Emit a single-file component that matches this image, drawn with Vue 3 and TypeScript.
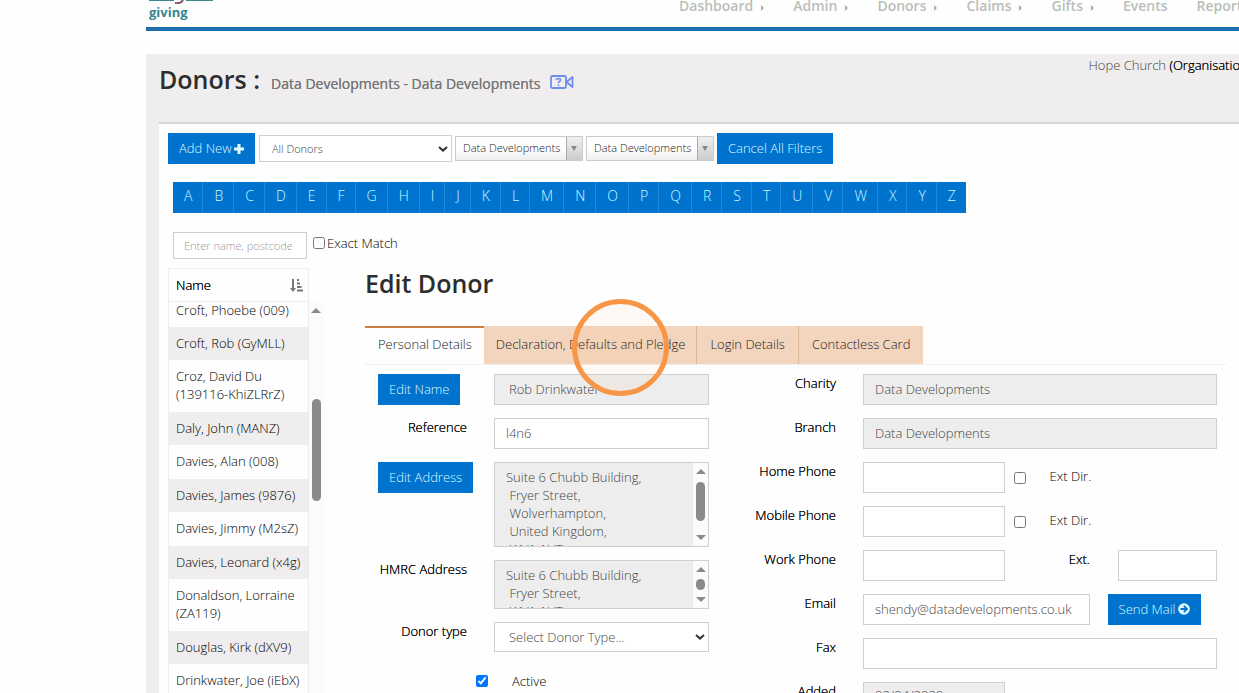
<script setup lang="ts">
import { ref } from 'vue'

interface MenuItem { label: string; sub: boolean }
interface Phone { id: string; label: string }

const menu: MenuItem[] = [
  { label: 'Dashboard', sub: true },
  { label: 'Admin', sub: true },
  { label: 'Donors', sub: true },
  { label: 'Claims', sub: true },
  { label: 'Gifts', sub: true },
  { label: 'Events', sub: false },
  { label: 'Reports', sub: true },
]
const letters: string[] = 'ABCDEFGHIJKLMNOPQRSTUVWXYZ'.split('')
const donors: string[] = [
  'Croft, Phoebe (009)',
  'Croft, Rob (GyMLL)',
  'Croz, David Du (139116-KhiZLRrZ)',
  'Daly, John (MANZ)',
  'Davies, Alan (008)',
  'Davies, James (9876)',
  'Davies, Jimmy (M2sZ)',
  'Davies, Leonard (x4g)',
  'Donaldson, Lorraine (ZA119)',
  'Douglas, Kirk (dXV9)',
  'Drinkwater, Joe (iEbX)',
]
const phones: Phone[] = [
  { id: 'home', label: 'Home Phone' },
  { id: 'mobile', label: 'Mobile Phone' },
]
const name = ref('Rob Drinkwater')
const reference = ref('l4n6')
const address = ref('Suite 6 Chubb Building,\n Fryer Street,\n Wolverhampton,\n United Kingdom,\n WV1 1HT')
const hmrc = ref('Suite 6 Chubb Building,\n Fryer Street,\n WV1 1HT')
const email = ref('shendy@datadevelopments.co.uk')
const active = ref(true)
</script>

<template>
  <div class="page">
    <header class="top">
      <a href="#" class="logo">
        <svg class="mark" width="66" height="4" viewBox="0 0 66 4" aria-hidden="true">
          <path d="M0 0H25V1H0zM37 0H64V1H37z" fill="#3b8a92" />
          <path d="M26 3Q32 4 34 0" fill="none" stroke="#7c5a68" stroke-width="2" />
        </svg>
        <span>giving</span>
      </a>
      <nav class="menu">
        <a v-for="m in menu" :key="m.label" href="#">{{ m.label }}<i v-if="m.sub" class="caret"></i></a>
      </nav>
    </header>

    <div class="shell">
      <div class="title">
        <h1>Donors :</h1>
        <span class="sub">Data Developments - Data Developments</span>
        <svg class="cam" width="24" height="16" viewBox="0 0 24 16" fill="none" stroke="#6e8ff0" aria-hidden="true">
          <rect x="1" y="2" width="15" height="12" rx="1.5" stroke-width="1.8" />
          <path d="M16.5 8L22.5 3V13Z" stroke-width="1.8" stroke-linejoin="round" />
          <path d="M6.3 6.2Q6.5 4.5 8.4 4.5Q10.5 4.5 10.5 6.1Q10.5 7 9.4 7.6Q8.5 8.1 8.5 9.2M8.5 10.4V12" stroke-width="1.7" />
        </svg>
        <span class="org">Hope Church <b>(Organisation)</b></span>
      </div>

      <main class="panel">
        <div class="toolbar">
          <button type="button" class="btn">Add New
            <svg width="10" height="10" viewBox="0 0 10 10" aria-hidden="true"><path d="M3.5 0h3v3.5H10v3H6.5V10h-3V6.5H0v-3h3.5z" fill="#e4fbff" /></svg>
          </button>
          <div class="pick filter">
            <select aria-label="Donor filter"><option>All Donors</option></select>
            <svg width="10" height="6" viewBox="0 0 10 6" aria-hidden="true"><path d="M1 1L5 4.6L9 1" fill="none" stroke="#333" stroke-width="2" /></svg>
          </div>
          <button type="button" class="chosen"><span>Data Developments</span><i></i></button>
          <button type="button" class="chosen"><span>Data Developments</span><i></i></button>
          <button type="button" class="btn">Cancel All Filters</button>
        </div>

        <div class="letters">
          <a v-for="l in letters" :key="l" href="#">{{ l }}</a>
        </div>

        <div class="search">
          <input type="text" class="find" aria-label="Search" placeholder="Enter name, postcode or ref">
          <input id="exact" type="checkbox"><label for="exact">Exact Match</label>
        </div>

        <div class="body">
          <section class="list">
            <table>
              <thead>
                <tr><th><div class="head">Name
                  <svg width="13" height="13" viewBox="0 0 13 13" fill="#777" aria-hidden="true"><path d="M2 0h2v9h2L3 13L0 9h2zM7 0h2v2H7zM7 3.5h3v2H7zM7 7h4.5v2H7zM7 10.5h6v2H7z" /></svg>
                </div></th></tr>
              </thead>
              <tbody><tr v-for="d in donors" :key="d"><td>{{ d }}</td></tr></tbody>
            </table>
            <div class="rail" aria-hidden="true"><i class="up"></i><i class="thumb"></i></div>
          </section>

          <section class="edit">
            <h2>Edit Donor</h2>
            <div class="tabs" role="tablist">
              <button type="button" role="tab" class="on">Personal Details</button>
              <button type="button" role="tab" class="target">Declaration, Defaults and Pledge<span class="ring"></span></button>
              <button type="button" role="tab">Login Details</button>
              <button type="button" role="tab">Contactless Card</button>
            </div>

            <form class="form" @submit.prevent>
              <div class="col left">
                <div class="row">
                  <div class="act"><button type="button" class="btn">Edit Name</button></div>
                  <input v-model="name" type="text" class="inset" aria-label="Name" disabled>
                </div>
                <div class="row">
                  <label for="ref">Reference</label>
                  <input id="ref" v-model="reference" type="text">
                </div>
                <div class="row">
                  <div class="act"><button type="button" class="btn">Edit Address</button></div>
                  <div class="area tall">
                    <textarea v-model="address" aria-label="Address" disabled></textarea>
                    <div class="bar" aria-hidden="true"><i class="up"></i><i class="thumb"></i><i class="down"></i></div>
                  </div>
                </div>
                <div class="row">
                  <label for="hmrc">HMRC Address</label>
                  <div class="area short">
                    <textarea id="hmrc" v-model="hmrc" disabled></textarea>
                    <div class="bar" aria-hidden="true"><i class="up"></i><i class="thumb"></i><i class="down"></i></div>
                  </div>
                </div>
                <div class="row">
                  <label for="type">Donor type</label>
                  <div class="pick">
                    <select id="type"><option>Select Donor Type...</option></select>
                    <svg width="10" height="6" viewBox="0 0 10 6" aria-hidden="true"><path d="M1 1L5 4.6L9 1" fill="none" stroke="#333" stroke-width="2" /></svg>
                  </div>
                </div>
                <div class="tick"><input id="active" v-model="active" type="checkbox"><label for="active">Active</label></div>
              </div>

              <div class="col right">
                <div class="row">
                  <label for="charity">Charity</label>
                  <input id="charity" type="text" value="Data Developments" disabled>
                </div>
                <div class="row">
                  <label for="branch">Branch</label>
                  <input id="branch" type="text" value="Data Developments" disabled>
                </div>
                <div v-for="p in phones" :key="p.id" class="row">
                  <label :for="p.id">{{ p.label }}</label>
                  <div class="split phone">
                    <input :id="p.id" type="text">
                    <input :id="p.id + '-dir'" type="checkbox">
                    <label :for="p.id + '-dir'" class="plain">Ext Dir.</label>
                  </div>
                </div>
                <div class="row">
                  <label for="work">Work Phone</label>
                  <div class="split work">
                    <input id="work" type="text">
                    <label for="ext">Ext.</label>
                    <input id="ext" type="text">
                  </div>
                </div>
                <div class="row">
                  <label for="email">Email</label>
                  <div class="split mail">
                    <input id="email" v-model="email" type="text">
                    <button type="button" class="btn">Send Mail
                      <svg width="12" height="12" viewBox="0 0 12 12" aria-hidden="true"><circle cx="6" cy="6" r="5.8" fill="#e4fbff" /><path d="M2.5 6H8.5M5.8 2.8L9 6L5.8 9.2" fill="none" stroke="#0073cf" stroke-width="1.8" /></svg>
                    </button>
                  </div>
                </div>
                <div class="row">
                  <label for="fax">Fax</label>
                  <input id="fax" type="text">
                </div>
                <div class="row">
                  <label for="added">Added</label>
                  <div class="split phone"><input id="added" type="text" class="stamp" value="02/04/2020" disabled></div>
                </div>
              </div>
            </form>
          </section>
        </div>
      </main>
    </div>
  </div>
</template>

<style>
body { margin: 0; background: #fefefe; }
</style>

<style scoped>
* { box-sizing: border-box; }
.page {
  height: 100vh;
  overflow: hidden;
  padding-left: 146px;
  font: 300 13px/18px "Open Sans", "Noto Sans", sans-serif;
  color: #000;
}
a { text-decoration: none; }
button, input, select, textarea { font: inherit; margin: 0; border-radius: 0; }

.top { display: flex; height: 31px; border-bottom: 4px solid #1c6dac; }
.logo { display: flex; flex-direction: column; width: 533px; flex: none; padding-left: 3px; font: 700 13px/16px "Open Sans", sans-serif; color: #35868f; }
.mark { display: block; flex: none; }
.menu { display: flex; align-items: flex-start; gap: 29px; font-size: 14px; font-weight: 600; line-height: 12px; white-space: nowrap; }
.menu a { color: #b9beb9; display: flex; align-items: center; flex: none; }
.caret { margin: 3px 0 0 8px; border-left: 3px solid #a9aea9; border-top: 3px solid transparent; border-bottom: 3px solid transparent; }

.shell { margin-top: 23px; background: #efeded; padding-left: 13px; }
.title { display: flex; height: 68px; padding-top: 8px; align-items: flex-start; white-space: nowrap; overflow: hidden; }
h1, h2 { margin: 0; font-size: 25px; line-height: 34px; font-weight: 600; color: #2d2d2d; }
.sub { margin: 12px 0 0 11px; font-size: 14px; font-weight: 400; line-height: 20px; color: #777; text-shadow: 0 0 currentColor; }
.cam { margin: 12px 0 0 10px; flex: none; }
.org { margin: -6px 0 0 514px; font-weight: 300; color: #444; flex: none; }
.org b { font-weight: 300; color: #000; text-shadow: 0 0 currentColor; }

.panel { border-top: 2px solid #d5d5dc; background: #fefefe; padding: 9px 13px 0 9px; }
.btn { height: 31px; padding: 0 11px 2px; border: 0; background: #0073cf; color: #dcfaff; white-space: nowrap; flex: none; }
.btn svg { vertical-align: -1px; margin-left: -1px; }
.toolbar { display: flex; align-items: center; gap: 3px; }
.pick { position: relative; display: flex; }
.pick select { appearance: none; width: 100%; height: 30px; padding: 0 20px 0 14px; border: 1px solid #ccd0d4; background: #fff; color: #444; }
.pick svg { position: absolute; right: 4px; top: 12px; }
.filter { width: 193px; margin-left: 1px; }
.filter select { height: 27px; font-size: 11px; padding-left: 12px; }
.filter svg { top: 11px; }
.chosen { display: flex; width: 128px; height: 25px; padding: 0; border: 1px solid #c8ccd0; background: linear-gradient(#fff 50%, #eee); font-size: 11px; color: #222; white-space: nowrap; }
.chosen span { flex: 1; text-align: left; padding-left: 7px; line-height: 22px; }
.chosen i { width: 16px; height: 23px; border-left: 1px solid #aaa; background: linear-gradient(#f0f0f0, #ccc); display: flex; align-items: center; justify-content: center; }
.chosen i::after { content: ""; border-top: 5px solid #888; border-left: 3px solid transparent; border-right: 3px solid transparent; }

.letters { display: flex; width: max-content; margin: 18px 0 0 5px; background: #0073cf; font-size: 14px; }
.letters a { padding: 0 10px 0 11px; line-height: 28px; height: 31px; color: #ccf8ff; border-right: 1px solid #2187d8; }
.letters a:last-child { border-right: 0; }

.search { display: flex; margin: 19px 0 0 5px; height: 27px; }
.find { width: 134px; padding: 0 14px 0 10px; border: 1px solid #ccd0d4; font-size: 11px; color: #555; }
.find::placeholder { color: #999; }
.search input[type=checkbox] { margin: 5px 2px 0 6px; }
.search label { line-height: 22px; }
input[type=checkbox] { width: 12px; height: 12px; flex: none; }

.body { display: flex; margin-top: 9px; }
.list { display: flex; width: 155px; flex: none; }
table { width: 141px; border-collapse: collapse; display: block; }
thead, tbody, tr, th, td { display: block; }
th { height: 34px; border: 1px solid #eee; padding: 8px 7px; font-weight: 300; text-shadow: 0 0 currentColor; }
.head { display: flex; justify-content: space-between; align-items: center; margin-right: -2px; line-height: 16px; }
td { padding: 7px 2px 9px 7px; border-left: 1px solid #eee; border-right: 1px solid #eee; }
tr:nth-child(even) td { background: #efeded; padding-bottom: 8px; }
tbody tr:first-child td { padding-top: 0; padding-bottom: 8px; margin-top: -1px; }
.rail { flex: 1; margin: 34px 0 0; background: #fbfbfb; display: flex; flex-direction: column; align-items: center; padding-top: 6px; }
.up { border-bottom: 5px solid #8a8a8a; border-left: 5px solid transparent; border-right: 5px solid transparent; }
.down { border-top: 5px solid #8a8a8a; border-left: 5px solid transparent; border-right: 5px solid transparent; }
.thumb { width: 9px; border-radius: 5px; background: #8a8a8a; }
.rail .thumb { margin-top: 86px; height: 102px; }

.edit { flex: 1; min-width: 0; margin-left: 42px; }
h2 { margin-top: -2px; }
.tabs { display: flex; margin-top: 26px; height: 39px; border-bottom: 1px solid #eee; }
.tabs button { height: 38px; padding: 0 13px 2px; border: 0; border-right: 1px solid #e0b795; background: #f3d5bd; color: #222; white-space: nowrap; flex: none; }
.tabs button.on { background: #fefefe; border-top: 2px solid #cc7f3f; border-right: 0; padding: 0 12px 4px 13px; }
.tabs button:last-child { border-right: 0; }
.tabs button.target { position: relative; padding: 0 11px 2px 12px; }
.ring { position: absolute; left: 88px; top: -27px; width: 97px; height: 97px; border: 5px solid #f79646; border-radius: 50%; background: rgba(247, 150, 70, 0.05); pointer-events: none; }

.form { display: grid; grid-template-columns: minmax(0, 344fr) minmax(0, 508fr); padding: 9px 9px 0 0; }
.col { display: flex; flex-direction: column; gap: 13px; }
.row { display: grid; grid-template-columns: 102px minmax(0, 1fr); column-gap: 27px; align-items: start; }
.right .row { grid-template-columns: 127px minmax(0, 1fr); }
.row label { text-align: right; white-space: nowrap; text-shadow: 0 0 currentColor; }
.row input[type=text] { width: 100%; min-width: 0; height: 31px; padding: 0 11px 2px; border: 1px solid #ccd0d4; background: #fff; color: #444; }
.row input[type=text]:disabled, .area textarea:disabled { background: #ededed; }
.row input[type=text].inset { padding-left: 14px; }
.row input[type=text].stamp { padding-bottom: 6px; }
.act { padding-left: 13px; }
.area { display: flex; border: 1px solid #ccd0d4; background: #ededed; overflow: hidden; }
.tall { height: 85px; }
.short { height: 49px; }
.area textarea { flex: 1; min-width: 0; padding: 5px 0 0 11px; border: 0; resize: none; overflow: hidden; color: #444; }
.bar { width: 15px; background: #fbfbfb; display: flex; flex-direction: column; align-items: center; justify-content: space-between; padding: 6px 0; }
.tall .thumb { height: 39px; margin-bottom: 7px; }
.short .thumb { height: 11px; }
.tick { display: flex; align-items: center; padding-left: 111px; margin-top: 7px; }
.tick input { margin-right: 24px; }
.split { display: grid; }
.phone { grid-template-columns: minmax(0, 40%) 12px minmax(0, 1fr); column-gap: 9px; align-items: center; }
.row .plain { text-align: left; text-shadow: none; padding: 0 0 3px 15px; }
.work { grid-template-columns: minmax(0, 40%) minmax(0, 1fr) minmax(0, 28%); }
.work label { padding-right: 28px; }
.mail { display: flex; gap: 18px; }
.row .mail input[type=text] { width: 64%; }
</style>
